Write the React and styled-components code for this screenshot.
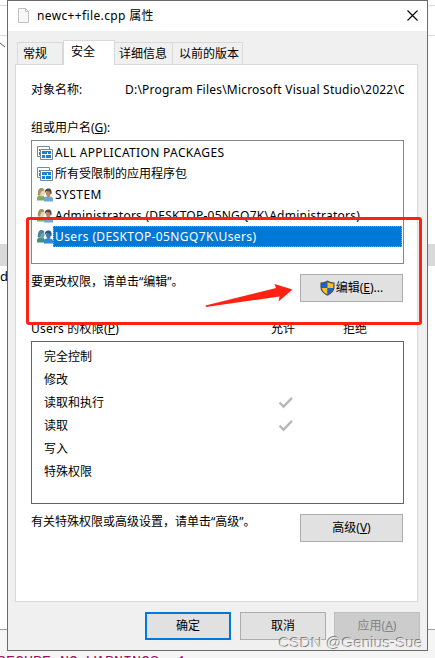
import React from "react";
import styled, { createGlobalStyle } from "styled-components";

const GlobalStyle = createGlobalStyle`
  * {
    box-sizing: border-box;
  }

  body {
    margin: 0;
    overflow: hidden;
    font-family: "Noto Sans", "Noto Sans CJK SC", sans-serif;
    font-size: 12px;
    color: #000;
  }
`;

const Desktop = styled.div`
  position: relative;
  width: 435px;
  height: 658px;
  overflow: hidden;
  background: #fff;
`;

const Editor = styled.div`
  height: 658px;
  display: flex;
  flex-direction: column;
`;

const EditorBar = styled.div`
  height: ${(props) => props.$height}px;
  flex: none;
  border-bottom: 1px solid #d9d9d9;
`;

const EditorBody = styled.div`
  flex: 1;
`;

const ScrollArrow = styled.svg`
  display: block;
  margin-top: 6px;
`;

const CurrentLine = styled.div`
  height: 22px;
  margin-top: 196px;
  background: #d9d9d9;
`;

const CodeText = styled.div`
  height: 20px;
  line-height: 20px;
  font-size: 13px;
`;

const EditorFooter = styled.div`
  height: 29px;
  padding-top: 23px;
  border-top: 1px solid #a0a0a0;
  background: #f5f5f5;
  color: #99115f;
  font: 15px/20px "Liberation Mono", monospace;
  white-space: pre;
  text-indent: -3px;
`;

const Dialog = styled.div`
  position: absolute;
  left: 7px;
  top: 0;
  width: 421px;
  height: 651px;
  border: 1px solid #6b6b6b;
  background: #f0f0f0;
  display: flex;
  flex-direction: column;
`;

const TitleBar = styled.div`
  height: 30px;
  flex: none;
  padding: 0 9px 1px 10px;
  display: flex;
  align-items: center;
  background: #fff;
`;

const Text = styled.span`
  display: block;
  line-height: 18px;
  white-space: pre;
  letter-spacing: ${(props) => props.$spacing || 0}px;

  u {
    text-underline-offset: 1px;
  }
`;

const Title = styled(Text)`
  flex: 1;
  margin-left: 8px;
`;

const Tabs = styled.div`
  height: 33px;
  flex: none;
  padding-left: 9px;
  display: flex;
  align-items: flex-end;
  z-index: 1;
`;

const Tab = styled.div`
  width: ${(props) => props.$width}px;
  height: ${(props) => (props.$active ? 25 : 22)}px;
  margin-bottom: ${(props) => (props.$active ? -1 : 0)}px;
  padding-left: ${(props) => props.$pad}px;
  padding-top: 2px;
  border: 1px solid #d9d9d9;
  border-bottom: 0;
  border-left-width: ${(props) => (props.$joined ? 0 : 1)}px;
  background: ${(props) => (props.$active ? "#fff" : "#f0f0f0")};
`;

const Panel = styled.div`
  width: 403px;
  height: 538px;
  flex: none;
  margin-left: 7px;
  padding: 16px 13px 0 15px;
  border: 1px solid #d9d9d9;
  background: #fff;
`;

const ObjectRow = styled.div`
  display: flex;
  margin-bottom: 20px;
`;

const ObjectLabel = styled(Text)`
  width: 94px;
  flex: none;
`;

const ObjectPath = styled(Text)`
  width: 279px;
  overflow: hidden;
`;

const UserList = styled.div`
  height: 124px;
  margin-top: 3px;
  padding: 1px;
  border: 1px solid #828790;
`;

const UserRow = styled.div`
  height: 21px;
  padding-left: 4px;
  display: flex;
  align-items: center;

  svg {
    flex: none;
  }
`;

const UserName = styled(Text)`
  height: 21px;
  line-height: 21px;
  padding-left: 2px;
  flex: 1;
  color: ${(props) => (props.$selected ? "#fff" : "#000")};
  background: ${(props) => (props.$selected ? "#0078d7" : "none")};
  outline: ${(props) => (props.$selected ? "1px dotted #ff8728" : "none")};
  outline-offset: -1px;
`;

const ActionRow = styled.div`
  display: flex;
  justify-content: space-between;
  align-items: flex-start;
  height: 56px;
  padding-top: 10px;
  padding-right: 1px;
`;

const Hint = styled(Text)`
  margin-top: -1px;
`;

const Button = styled.button`
  width: ${(props) => props.$width || 103}px;
  height: 28px;
  padding: 0;
  display: flex;
  align-items: center;
  justify-content: center;
  gap: 1px;
  font: inherit;
  color: ${(props) => (props.disabled ? "#838383" : "#000")};
  background: ${(props) => (props.disabled ? "#cccccc" : "#e1e1e1")};
  border: ${(props) => (props.$primary ? "2px solid #0078d7" : "1px solid #adadad")};
  border-color: ${(props) => props.disabled && "#bfbfbf"};
  margin-right: ${(props) => (props.$primary ? 1 : 0)}px;
`;

const PermissionHead = styled.div`
  display: grid;
  grid-template-columns: 240px 72px 1fr;
  height: 21px;
`;

const PermissionList = styled.div`
  height: 163px;
  padding: 3px 0 0 12px;
  border: 1px solid #646464;
`;

const PermissionRow = styled.div`
  height: 23px;
  display: grid;
  grid-template-columns: 234px 1fr;
  align-items: center;
`;

const Footer = styled.div`
  display: flex;
  justify-content: flex-end;
  gap: 8px;
  padding: 10px 7px 0 0;
`;

const Highlight = styled.div`
  position: absolute;
  left: 26px;
  top: 217px;
  width: 396px;
  height: 108px;
  border: 3px solid #ff2213;
  border-radius: 3px;
`;

const Arrow = styled.svg`
  position: absolute;
  left: 200px;
  top: 275px;
`;

const Watermark = styled.div`
  position: absolute;
  left: 279px;
  top: 633px;
  font: 15.3px/20px "Liberation Sans", sans-serif;
  color: rgba(235, 235, 235, 0.85);
  text-shadow: -1px -1px 0 rgba(110, 110, 110, 0.85);
  white-space: pre;
`;

const FileIcon = () => (
  <svg width="11" height="15" viewBox="0 0 11 15">
    <path d="M.5.5h7l3 3v11H.5z" fill="#f8f8f8" stroke="#c0c0c0" />
    <path d="M7.5.5v3h3" fill="none" stroke="#c0c0c0" />
  </svg>
);

const CloseIcon = () => (
  <svg width="11" height="11" viewBox="0 0 11 11">
    <path d="M.5.5l10 10M10.5.5l-10 10" stroke="#000" strokeWidth="1.1" />
  </svg>
);

const PackageIcon = () => (
  <svg width="16" height="16" viewBox="0 0 16 16">
    <path d="M.5 1.500h12v10H.5z" fill="#fff" stroke="#7c8790" />
    <path d="M2 4h1v2H2zM2 7h1v3H2z" fill="#1683d8" />
    <path d="M3.500 4.500h12v10h-12z" fill="#fff" stroke="#7c8790" />
    <path d="M5 6h5v3H5zM11 6h3v3h-3zM5 10h3v3H5zM9 10h5v3H9z" fill="#1683d8" />
    <path d="M5 6h9v1H5z" fill="#1683d8" />
  </svg>
);

const GroupIcon = ({ selected }) => (
  <svg width="16" height="16" viewBox="0 0 16 16">
    <path d="M0 13.500V11c0-1.600 1.500-2.500 4-2.500s4 1 4 3v2z" fill={selected ? "#3f907c" : "#7faa58"} />
    <path d="M2.800 5.500c0-2 .7-3 2.200-3s2.500 1 2.500 3S6.500 9.500 5 9.500 2.800 7.500 2.800 5.500z" fill={selected ? "#6f9fb4" : "#ecd3ae"} />
    <path d="M.8 8.500C.8 3 1.800 1 4.500 1 6.500 1 7.500 2 7.300 3.500L4 4.500 3 8.500z" fill={selected ? "#4b829b" : "#a49364"} />
    <path d="M7 14.500V12c0-1.800 1.500-2.800 4.300-2.800S16 10.200 16 12v2.500z" fill={selected ? "#2f8ad0" : "#6ea8d8"} />
    <path d="M9 6c0-2 1-3 2.500-3s2.200 1 2.200 3-.8 4.200-2.200 4.200S9 8 9 6z" fill={selected ? "#3b7ca9" : "#b98a62"} />
    <path d="M8 6c-.5-3.500 1.500-4.500 3.500-4.500 2.200 0 3.500 1.500 3 5.500h-1L12.800 4.500 9.500 4z" fill={selected ? "#245784" : "#54453e"} />
  </svg>
);

const ShieldIcon = () => (
  <svg width="15" height="16" viewBox="0 0 14 16" preserveAspectRatio="none">
    <path d="M7 .5C5 1.800 3 2.300.4 2.500V7c0 4 2.600 6.700 6.600 8.700C11 13.700 13.600 11 13.600 7V2.500C11 2.300 9 1.800 7 .5z" fill="#4d5054" />
    <path d="M7 1.900C5.400 3 3.600 3.400 1.600 3.600V8H7z" fill="#1467c6" />
    <path d="M7 1.900C8.600 3 10.400 3.400 12.400 3.600V8H7z" fill="#fdbe2e" />
    <path d="M1.600 8c.4 2.900 2.500 5 5.400 6.400V8z" fill="#fdbe2e" />
    <path d="M12.400 8c-.4 2.900-2.500 5-5.400 6.400V8z" fill="#1467c6" />
  </svg>
);

const CheckIcon = () => (
  <svg width="16" height="14" viewBox="0 0 16 14">
    <path d="M1.500 6.500l4 4.200L14 1.800" fill="none" stroke="#b8b8b8" strokeWidth="2.400" />
  </svg>
);

const users = [
  { name: "ALL APPLICATION PACKAGES", icon: "package", spacing: 0.34 },
  { name: "所有受限制的应用程序包", icon: "package" },
  { name: "SYSTEM", icon: "group", spacing: 0.45 },
  { name: "Administrators (DESKTOP-05NGQ7K\\Administrators)", icon: "group", spacing: 0.24 },
  { name: "Users (DESKTOP-05NGQ7K\\Users)", icon: "group", spacing: 0.38, selected: true },
];

const permissions = [
  { name: "完全控制" },
  { name: "修改" },
  { name: "读取和执行", allowed: true },
  { name: "读取", allowed: true },
  { name: "写入" },
  { name: "特殊权限" },
];

const App = () => {
  return (
    <Desktop>
      <GlobalStyle />
      <Editor>
        <EditorBar $height={6} />
        <EditorBar $height={30} />
        <EditorBody>
          <ScrollArrow width="6" height="6" viewBox="0 0 6 6">
            <path d="M0 1l5 4" stroke="#555" fill="none" />
          </ScrollArrow>
          <CurrentLine />
          <CodeText>d</CodeText>
        </EditorBody>
        <EditorFooter>SECURE_NO_WARNINGS  1</EditorFooter>
      </Editor>

      <Dialog>
        <TitleBar>
          <FileIcon />
          <Title $spacing={0.36}>newc++file.cpp 属性</Title>
          <CloseIcon />
        </TitleBar>
        <Tabs>
          <Tab $width={46} $pad={5}><Text>常规</Text></Tab>
          <Tab $width={52} $pad={7} $active><Text>安全</Text></Tab>
          <Tab $width={58} $pad={4} $joined><Text>详细信息</Text></Tab>
          <Tab $width={70} $pad={6} $joined><Text>以前的版本</Text></Tab>
        </Tabs>
        <Panel>
          <ObjectRow>
            <ObjectLabel>对象名称:</ObjectLabel>
            <ObjectPath $spacing={0.21}>D:\Program Files\Microsoft Visual Studio\2022\C</ObjectPath>
          </ObjectRow>
          <Text>组或用户名(<u>G</u>):</Text>
          <UserList>
            {users.map((user) => (
              <UserRow key={user.name}>
                {user.icon === "package" ? <PackageIcon /> : <GroupIcon selected={user.selected} />}
                <UserName $selected={user.selected} $spacing={user.spacing}>{user.name}</UserName>
              </UserRow>
            ))}
          </UserList>
          <ActionRow>
            <Hint>要更改权限，请单击“编辑”。</Hint>
            <Button>
              <ShieldIcon />
              <Text>编辑(<u>E</u>)...</Text>
            </Button>
          </ActionRow>
          <PermissionHead>
            <Text $spacing={0.2}>Users 的权限(<u>P</u>)</Text>
            <Text>允许</Text>
            <Text>拒绝</Text>
          </PermissionHead>
          <PermissionList>
            {permissions.map((permission) => (
              <PermissionRow key={permission.name}>
                <Text>{permission.name}</Text>
                {permission.allowed && <CheckIcon />}
              </PermissionRow>
            ))}
          </PermissionList>
          <ActionRow>
            <Hint>有关特殊权限或高级设置，请单击“高级”。</Hint>
            <Button>
              <Text>高级(<u>V</u>)</Text>
            </Button>
          </ActionRow>
        </Panel>
        <Footer>
          <Button $width={86} $primary><Text>确定</Text></Button>
          <Button $width={86}><Text>取消</Text></Button>
          <Button $width={86} disabled><Text>应用(<u>A</u>)</Text></Button>
        </Footer>
      </Dialog>

      <Highlight />
      <Arrow width="100" height="40" viewBox="0 0 100 40">
        <path d="M5.500 30.500L76 13 74.500 9l18 5.500L78.500 26.500l1-5L6 32z" fill="#ff2213" />
      </Arrow>
      <Watermark>CSDN @Genius-Sue</Watermark>
    </Desktop>
  );
};

export default App;
